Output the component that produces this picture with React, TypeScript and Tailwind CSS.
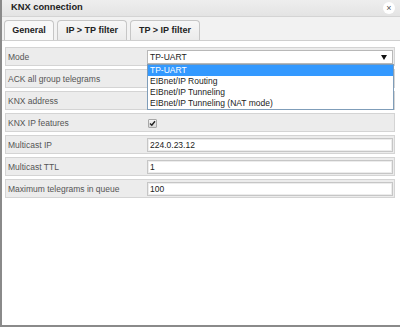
import React from "react";

const rows = [
  { label: "Mode", kind: "select", value: "TP-UART" },
  { label: "ACK all group telegrams", kind: "empty" },
  { label: "KNX address", kind: "empty" },
  { label: "KNX IP features", kind: "check" },
  { label: "Multicast IP", kind: "input", value: "224.0.23.12" },
  { label: "Multicast TTL", kind: "input", value: "1" },
  { label: "Maximum telegrams in queue", kind: "input", value: "100" },
];

export default function App() {
  return (
    <div
      className="relative w-[400px] h-[327px] bg-white overflow-hidden text-[#333]"
      style={{ fontFamily: "'Liberation Sans', Arial, sans-serif" }}
    >
      <div className="flex flex-col h-full border-l-2 border-b-2 border-[#8a8a8a]">
        {/* title */}
        <div className="relative h-[17px] flex items-center pl-[9px] bg-gradient-to-b from-[#eeeeee] to-[#e4e4e4] border-b border-[#d4d4d4]">
          <span className="text-[9.3px] font-bold text-[#222] leading-none">KNX connection</span>
          <div className="absolute right-[5px] top-[2px] w-[12px] h-[12px] rounded-full bg-white flex items-center justify-center text-[9px] leading-none text-[#555]">
            ×
          </div>
        </div>
        {/* tabs */}
        <div className="h-[24px] flex items-end pl-[2px] gap-[3px] bg-[#f2f2f2] border-b border-[#cfcfcf]">
          <div className="h-[20px] w-[50px] flex items-center justify-center rounded-t-[4px] border border-b-0 border-[#c6c6c6] bg-[#f8f8f8] text-[9px] font-bold text-[#222]">
            General
          </div>
          <div className="h-[20px] w-[70px] flex items-center justify-center rounded-t-[4px] border border-b-0 border-[#c6c6c6] bg-gradient-to-b from-[#f7f7f7] to-[#ebebeb] text-[9px] font-bold text-[#222]">
            IP &gt; TP filter
          </div>
          <div className="h-[20px] w-[70px] flex items-center justify-center rounded-t-[4px] border border-b-0 border-[#c6c6c6] bg-gradient-to-b from-[#f7f7f7] to-[#ebebeb] text-[9px] font-bold text-[#222]">
            TP &gt; IP filter
          </div>
        </div>
        {/* body */}
        <div className="relative flex-1 bg-white pt-[6px] pl-[3px] pr-[5px] flex flex-col gap-[3px]">
          {rows.map((r) => (
            <div
              key={r.label}
              className="h-[19px] flex items-center bg-[#ececec] border border-[#d4d4d4]"
            >
              <div className="w-[141px] pl-[2px] pt-[2px] text-[8.5px] text-[#555] leading-none">{r.label}</div>
              {r.kind === "select" && (
                <div className="relative h-[14px] flex-1 mr-[1px] bg-white border border-[#b8b8b8] flex items-center pl-[2px] pt-[1px] text-[8.5px] text-[#222]">
                  {r.value}
                  <span className="absolute right-[5px] top-[4px] w-0 h-0 border-l-[3px] border-r-[3px] border-t-[5px] border-l-transparent border-r-transparent border-t-[#111]" />
                </div>
              )}
              {r.kind === "input" && (
                <div className="h-[14px] flex-1 mr-[1px] bg-white border border-[#c6c6c6] shadow-[inset_0_0_0_1px_#ececec] flex items-center pl-[2px] pt-[1px] text-[8.5px] text-[#222]">
                  {r.value}
                </div>
              )}
              {r.kind === "empty" && <div className="h-[14px] flex-1 mr-[1px]" />}
              {r.kind === "check" && (
                <div className="w-[9px] h-[9px] ml-[1px] mt-[1px] border border-[#a8a8a8] bg-gradient-to-b from-[#f4f4f4] to-[#d8d8d8] rounded-[1px] flex items-center justify-center">
                  <svg width="7" height="7" viewBox="0 0 7 7">
                    <path d="M1 3.5 L2.8 5.3 L6 1.2" fill="none" stroke="#222" strokeWidth="1.4" />
                  </svg>
                </div>
              )}
            </div>
          ))}
          {/* dropdown list */}
          <div className="absolute left-[145px] top-[23px] w-[247px] bg-white border border-[#7f9db9] flex flex-col text-[8.5px] text-[#222] leading-none">
            <div className="h-[11px] flex items-center pl-[2px] bg-[#3399ff] text-white">TP-UART</div>
            <div className="h-[11px] flex items-center pl-[2px]">EIBnet/IP Routing</div>
            <div className="h-[11px] flex items-center pl-[2px]">EIBnet/IP Tunneling</div>
            <div className="h-[11px] flex items-center pl-[2px]">EIBnet/IP Tunneling (NAT mode)</div>
          </div>
        </div>
      </div>
    </div>
  );
}
